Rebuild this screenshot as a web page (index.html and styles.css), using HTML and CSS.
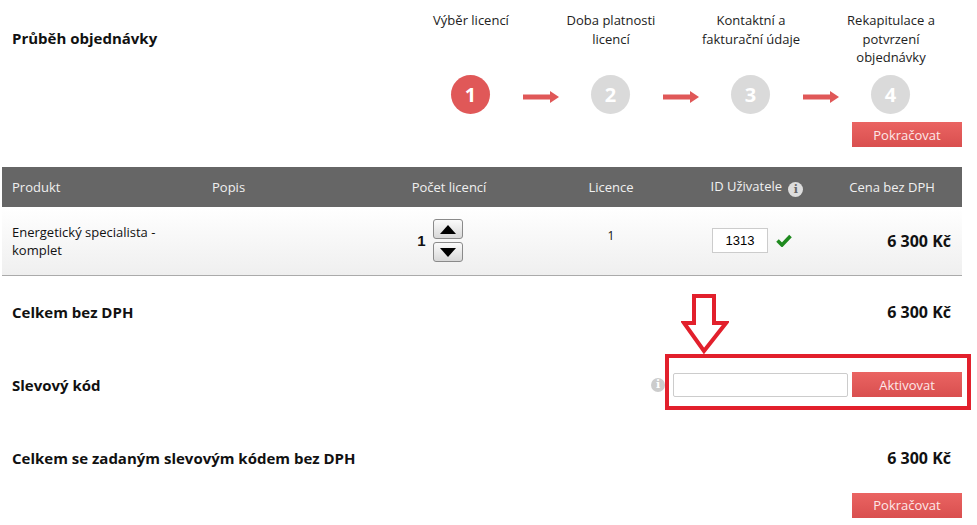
FILE: index.html
```html
<!DOCTYPE html>
<html lang="cs">
<head>
    <meta charset="UTF-8">
    <meta name="viewport" content="width=device-width, initial-scale=1.0">
    <title>Průběh objednávky</title>
    <link rel="stylesheet" href="styles.css">
</head>
<body>
    <div class="page">
        <div class="progress">
            <h1 class="title">Průběh objednávky</h1>
            <div class="steps">
                <div class="step-labels">
                    <span>Výběr licencí</span>
                    <span>Doba platnosti<br>licencí</span>
                    <span>Kontaktní a<br>fakturační údaje</span>
                    <span>Rekapitulace a<br>potvrzení<br>objednávky</span>
                </div>
                <div class="step-circles">
                    <span class="circle active">1</span>
                    <span class="arrow"><svg width="36" height="12" viewBox="0 0 36 12"><rect x="0" y="3.5" width="29" height="5" fill="#e05858"/><polygon points="27,0 36,6 27,12" fill="#e05858"/></svg></span>
                    <span class="circle">2</span>
                    <span class="arrow"><svg width="36" height="12" viewBox="0 0 36 12"><rect x="0" y="3.5" width="29" height="5" fill="#e05858"/><polygon points="27,0 36,6 27,12" fill="#e05858"/></svg></span>
                    <span class="circle">3</span>
                    <span class="arrow"><svg width="36" height="12" viewBox="0 0 36 12"><rect x="0" y="3.5" width="29" height="5" fill="#e05858"/><polygon points="27,0 36,6 27,12" fill="#e05858"/></svg></span>
                    <span class="circle">4</span>
                </div>
                <div class="actions">
                    <button class="btn">Pokračovat</button>
                </div>
            </div>
        </div>

        <table class="cart">
            <thead>
                <tr>
                    <th class="col-product">Produkt</th>
                    <th class="col-desc">Popis</th>
                    <th class="col-count">Počet licencí</th>
                    <th class="col-lic">Licence</th>
                    <th class="col-id">ID Uživatele <span class="info">i</span></th>
                    <th class="col-price">Cena bez DPH</th>
                </tr>
            </thead>
            <tbody>
                <tr>
                    <td class="col-product">Energetický specialista -<br>komplet</td>
                    <td class="col-desc"></td>
                    <td class="col-count">
                        <div class="qty">
                            <span class="qty-value">1</span>
                            <div class="spinner">
                                <button class="spin"><svg width="16" height="9" viewBox="0 0 16 9"><polygon points="8,0 16,9 0,9" fill="#000"/></svg></button>
                                <button class="spin"><svg width="16" height="9" viewBox="0 0 16 9"><polygon points="0,0 16,0 8,9" fill="#000"/></svg></button>
                            </div>
                        </div>
                    </td>
                    <td class="col-lic"><span class="lic-value">1</span></td>
                    <td class="col-id">
                        <div class="user-id">
                            <input type="text" class="id-input" value="1313">
                            <svg width="16" height="13" viewBox="0 0 16 13"><path d="M1.5 6.5 L6 11 L14.5 2" fill="none" stroke="#1f8a1f" stroke-width="3.6"/></svg>
                        </div>
                    </td>
                    <td class="col-price price">6 300 Kč</td>
                </tr>
            </tbody>
        </table>

        <div class="summary-row">
            <span class="label">Celkem bez DPH</span>
            <span class="price">6 300 Kč</span>
        </div>

        <div class="summary-row discount">
            <span class="label">Slevový kód</span>
            <div class="discount-form">
                <span class="info muted">i</span>
                <input type="text" class="code-input">
                <button class="btn">Aktivovat</button>
            </div>
            <svg class="mark-arrow" width="48" height="60" viewBox="0 0 48 60"><polygon points="13,2 33,2 33,29 45,29 23,57 3,29 13,29" fill="none" stroke="#e2202c" stroke-width="4" stroke-linejoin="miter"/></svg>
            <div class="mark-box"></div>
        </div>

        <div class="summary-row">
            <span class="label">Celkem se zadaným slevovým kódem bez DPH</span>
            <span class="price">6 300 Kč</span>
        </div>

        <div class="actions bottom">
            <button class="btn">Pokračovat</button>
        </div>
    </div>
</body>
</html>
```

FILE: styles.css
```css
body {
    margin: 0;
    font-family: "Open Sans", Arial, sans-serif;
    color: #111;
    background: #fff;
}
.page {
    width: 960px;
    margin-left: 2px;
}
.progress {
    display: flex;
    justify-content: space-between;
    padding-top: 11px;
}
.title {
    margin: 17px 0 0 10px;
    font-size: 15px;
    line-height: 20px;
    font-weight: bold;
}
.steps {
    width: 561px;
}
.step-labels {
    display: grid;
    grid-template-columns: repeat(4, 140px);
    height: 64px;
    font-size: 13px;
    line-height: 18.5px;
    color: #222;
    text-align: center;
}
.step-circles {
    display: flex;
    align-items: center;
    padding-left: 50px;
    height: 39px;
}
.circle {
    width: 39px;
    height: 39px;
    border-radius: 50%;
    background: #dadada;
    color: #fff;
    font-size: 20px;
    font-weight: bold;
    line-height: 39px;
    text-align: center;
}
.circle.active {
    background: #e05858;
}
.arrow {
    width: 101px;
    display: flex;
    justify-content: center;
    padding-top: 5px;
}
.arrow svg {
    display: block;
}
.actions {
    display: flex;
    justify-content: flex-end;
    margin-top: 8px;
}
.actions.bottom {
    margin-top: -1px;
}
.btn {
    width: 110px;
    height: 25px;
    border: none;
    border-radius: 0;
    padding: 0;
    background: linear-gradient(#ea6462, #d94f4f);
    color: #fde8e8;
    font-family: "Open Sans", Arial, sans-serif;
    font-size: 13px;
    cursor: pointer;
}
.cart {
    width: 960px;
    margin-top: 20px;
    border-collapse: collapse;
    table-layout: fixed;
}
.cart th,
.cart td {
    box-sizing: border-box;
    padding: 0 10px;
    text-align: center;
}
.cart th {
    height: 40px;
    background: #666;
    color: #f0f0f0;
    font-size: 13px;
    font-weight: normal;
}
.cart td {
    height: 68px;
    font-size: 13px;
    line-height: 18px;
    background: linear-gradient(#ffffff, #efefef);
    border-bottom: 1px solid #aaa;
}
.cart .col-product { width: 200px; text-align: left; }
.cart .col-desc { width: 166px; text-align: left; }
.cart .col-count { width: 162px; }
.cart .col-lic { width: 162px; }
.cart .col-id { width: 130px; }
.cart .col-price { width: 140px; }
.cart td.col-price {
    text-align: right;
    padding-right: 11px;
    font-size: 16px;
    font-weight: bold;
}
.info {
    display: inline-block;
    width: 15px;
    height: 15px;
    border-radius: 50%;
    background: #ddd;
    color: #666;
    font-family: "DejaVu Serif", serif;
    font-size: 11px;
    font-weight: bold;
    line-height: 15px;
    text-align: center;
    vertical-align: -2px;
    margin-left: 3px;
}
.info.muted {
    width: 14px;
    height: 14px;
    line-height: 14px;
    background: #ccc;
    color: #fff;
    margin-right: 8px;
}
.qty {
    display: flex;
    align-items: center;
    justify-content: center;
    gap: 7px;
    margin-left: -18px;
}
.qty-value {
    font-size: 15px;
    font-weight: bold;
    font-family: "Liberation Sans", Arial, sans-serif;
}
.spinner {
    display: flex;
    flex-direction: column;
    gap: 3px;
}
.spin {
    width: 30px;
    height: 20px;
    padding: 0;
    border: 1px solid #8a8a8a;
    border-radius: 3px;
    background: linear-gradient(#fbfbfb, #d8d8d8);
    display: flex;
    align-items: center;
    justify-content: center;
}
.lic-value {
    font-size: 12px;
    position: relative;
    top: -5px;
}
.user-id {
    display: flex;
    align-items: center;
    gap: 8px;
    padding-left: 10px;
}
.id-input {
    width: 56px;
    height: 25px;
    box-sizing: border-box;
    border: 1px solid #ccc;
    font-family: "Liberation Sans", Arial, sans-serif;
    font-size: 13px;
    text-align: center;
    padding: 0;
}
.price {
    font-size: 16px;
    font-weight: bold;
}
.summary-row {
    display: flex;
    justify-content: space-between;
    align-items: center;
    height: 72px;
    padding: 0 11px 0 10px;
}
.label {
    font-size: 15px;
    font-weight: bold;
}
.summary-row.discount {
    position: relative;
    height: 74px;
    padding-right: 0;
}
.discount-form {
    display: flex;
    align-items: center;
    gap: 4px;
}
.code-input {
    width: 175px;
    height: 24px;
    box-sizing: border-box;
    border: 1px solid #ccc;
    border-radius: 2px;
    margin-left: -4px;
}
.mark-box {
    position: absolute;
    left: 663px;
    top: 6px;
    width: 306px;
    height: 56px;
    box-sizing: border-box;
    border: 4px solid #e2202c;
}
.mark-arrow {
    position: absolute;
    left: 679px;
    top: -54px;
}
```
